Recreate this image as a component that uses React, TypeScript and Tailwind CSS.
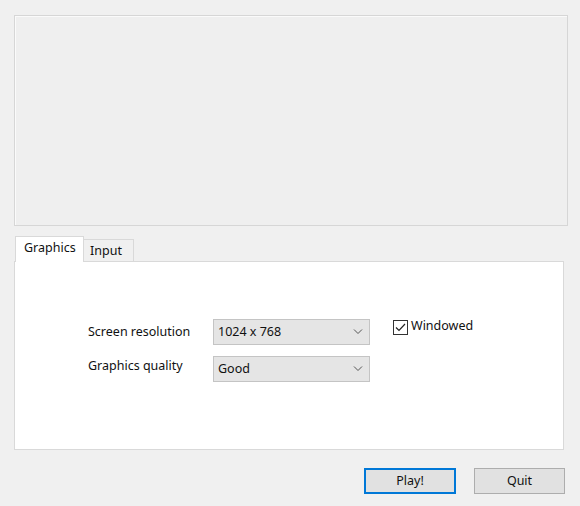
function Chevron() {
  return (
    <svg width="10" height="6" viewBox="0 0 10 6" fill="none" stroke="#555" strokeWidth="1">
      <path d="M1 0.5 L5 4.5 L9 0.5" />
    </svg>
  )
}

function Select({ value }: { value: string }) {
  return (
    <div className="flex h-[26px] w-[157px] items-center justify-between border border-[#c4c4c4] bg-[#e5e5e5] pl-[4px] pr-[6px] text-[12.5px] text-[#111]">
      <span>{value}</span>
      <Chevron />
    </div>
  )
}

export default function App() {
  return (
    <div
      className="flex h-[506px] w-[580px] flex-col bg-[#f0f0f0] pl-[14px] pt-[15px]"
      style={{ fontFamily: '"Noto Sans", "Open Sans", sans-serif' }}
    >
      <div className="h-[211px] w-[554px] border border-[#d6d6d6] bg-[#efefef] shadow-[inset_1px_1px_0_#fafafa]" />

      <div className="mt-[10px] flex h-[25px] items-end pl-px">
        <div className="z-10 -mb-px flex h-[26px] w-[69px] items-start border border-b-0 border-[#d9d9d9] bg-white pl-[8px] pt-[2px] text-[12.5px] text-[#111]">
          Graphics
        </div>
        <div className="flex h-[22px] w-[50px] items-start border border-b-0 border-l-0 border-[#d9d9d9] bg-[#f0f0f0] pl-[6px] pt-[2px] text-[12.5px] text-[#111]">
          Input
        </div>
      </div>

      <div className="flex h-[189px] w-[550px] flex-col border border-[#d9d9d9] bg-white pl-[73px] pt-[57px]">
        <div className="flex items-center">
          <div className="w-[125px] text-[12.5px] text-[#111]">Screen resolution</div>
          <Select value="1024 x 768" />
          <div className="ml-[23px] flex self-start items-center gap-[3px]">
            <div className="flex h-[15px] w-[15px] items-center justify-center border border-[#333] bg-white">
              <svg width="11" height="9" viewBox="0 0 11 9" fill="none" stroke="#222" strokeWidth="1.2">
                <path d="M1 4.5 L4 7.5 L10 1" />
              </svg>
            </div>
            <span className="-mt-[2px] text-[12.5px] text-[#111]">Windowed</span>
          </div>
        </div>
        <div className="mt-[11px] flex items-center">
          <div className="-mt-[5px] w-[125px] text-[12.5px] text-[#111]">Graphics quality</div>
          <Select value="Good" />
        </div>
      </div>

      <div className="mt-[18px] flex gap-[18px] pl-[350px]">
        <button
          type="button"
          className="h-[26px] w-[92px] border-2 border-[#0078d7] bg-[#e1e1e1] text-[12.5px] text-[#111]"
        >
          Play!
        </button>
        <button
          type="button"
          className="h-[26px] w-[91px] border border-[#adadad] bg-[#e1e1e1] text-[12.5px] text-[#111]"
        >
          Quit
        </button>
      </div>
    </div>
  )
}
